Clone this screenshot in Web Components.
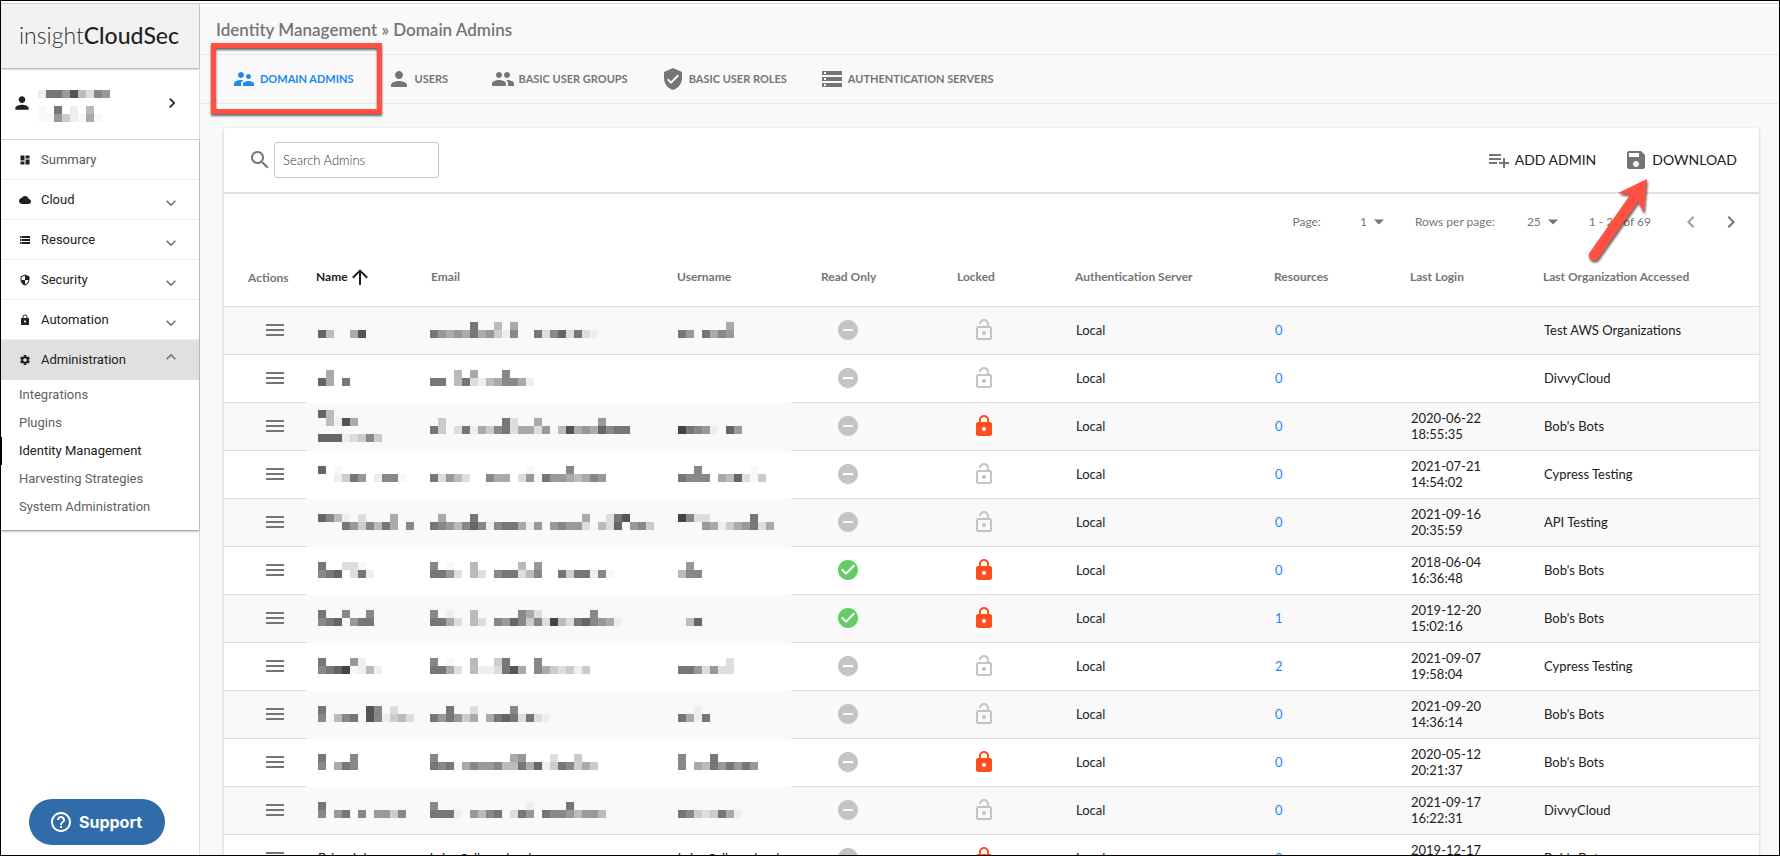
<!DOCTYPE html>
<html lang="en">
<head>
<meta charset="utf-8">
<title>Identity Management - Domain Admins</title>
<style>
    html, body {
        margin: 0;
        height: 100%;
    }
    body {
        font-family: Lato, "Liberation Sans", sans-serif;
        color: #212121;
        overflow: hidden;
    }
</style>
</head>
<body>

<app-shell>
    <side-nav slot="nav">
        <nav-group icon="dashboard" label="Summary" plain></nav-group>
        <nav-group icon="cloud" label="Cloud"></nav-group>
        <nav-group icon="storage" label="Resource"></nav-group>
        <nav-group icon="security" label="Security"></nav-group>
        <nav-group icon="lock" label="Automation"></nav-group>
        <nav-group icon="settings" label="Administration" open>
            <nav-link>Integrations</nav-link>
            <nav-link>Plugins</nav-link>
            <nav-link active>Identity Management</nav-link>
            <nav-link>Harvesting Strategies</nav-link>
            <nav-link>System Administration</nav-link>
        </nav-group>
    </side-nav>
    <page-header slot="header">
        <span slot="title">Identity Management » Domain Admins</span>
        <tab-item icon="supervisor" active marked>DOMAIN ADMINS</tab-item>
        <tab-item icon="person">USERS</tab-item>
        <tab-item icon="group">BASIC USER GROUPS</tab-item>
        <tab-item icon="verified">BASIC USER ROLES</tab-item>
        <tab-item icon="storage">AUTHENTICATION SERVERS</tab-item>
    </page-header>
    <admin-card></admin-card>
</app-shell>
<support-button>Support</support-button>

<script>
const icons = {
    dashboard: "M3 13h8V3H3v10zm0 8h8v-6H3v6zm10 0h8V11h-8v10zm0-18v6h8V3h-8z",
    cloud: "M19.35 10.04C18.67 6.59 15.64 4 12 4 9.11 4 6.6 5.64 5.35 8.04 2.34 8.36 0 10.91 0 14c0 3.31 2.69 6 6 6h13c2.76 0 5-2.24 5-5 0-2.64-2.05-4.78-4.65-4.96z",
    storage: "M2 20h20v-4H2v4zm2-3h2v2H4v-2zM2 4v4h20V4H2zm4 3H4V5h2v2zm-4 7h20v-4H2v4zm2-3h2v2H4v-2z",
    security: "M12 1L3 5v6c0 5.55 3.84 10.74 9 12 5.16-1.26 9-6.45 9-12V5l-9-4zm0 10.99h7c-.53 4.12-3.28 7.79-7 8.94V12H5V6.3l7-3.11v8.8z",
    lock: "M18 8h-1V6c0-2.76-2.24-5-5-5S7 3.24 7 6v2H6c-1.1 0-2 .9-2 2v10c0 1.1.9 2 2 2h12c1.1 0 2-.9 2-2V10c0-1.1-.9-2-2-2zm-6 9c-1.1 0-2-.9-2-2s.9-2 2-2 2 .9 2 2-.9 2-2 2zm3.1-9H8.9V6c0-1.71 1.39-3.1 3.1-3.1 1.71 0 3.1 1.39 3.1 3.1v2z",
    unlock: "M12 17c1.1 0 2-.9 2-2s-.9-2-2-2-2 .9-2 2 .9 2 2 2zm6-9h-1V6c0-2.76-2.24-5-5-5S7 3.24 7 6h1.9c0-1.71 1.39-3.1 3.1-3.1 1.71 0 3.1 1.39 3.1 3.1v2H6c-1.1 0-2 .9-2 2v10c0 1.1.9 2 2 2h12c1.1 0 2-.9 2-2V10c0-1.1-.9-2-2-2zm0 12H6V10h12v10z",
    settings: "M19.43 12.98c.04-.32.07-.64.07-.98s-.03-.66-.07-.98l2.11-1.65c.19-.15.24-.42.12-.64l-2-3.46c-.12-.22-.39-.3-.61-.22l-2.49 1c-.52-.4-1.08-.73-1.69-.98l-.38-2.65C14.46 2.18 14.25 2 14 2h-4c-.25 0-.46.18-.49.42l-.38 2.65c-.61.25-1.17.59-1.69.98l-2.49-1c-.23-.09-.49 0-.61.22l-2 3.46c-.13.22-.07.49.12.64l2.11 1.65c-.04.32-.07.65-.07.98s.03.66.07.98l-2.11 1.65c-.19.15-.24.42-.12.64l2 3.46c.12.22.39.3.61.22l2.49-1c.52.4 1.08.73 1.69.98l.38 2.65c.03.24.24.42.49.42h4c.25 0 .46-.18.49-.42l.38-2.65c.61-.25 1.17-.59 1.69-.98l2.49 1c.23.09.49 0 .61-.22l2-3.46c.12-.22.07-.49-.12-.64l-2.11-1.65zM12 15.5c-1.93 0-3.5-1.57-3.5-3.5s1.57-3.5 3.5-3.5 3.5 1.57 3.5 3.5-1.57 3.5-3.5 3.5z",
    person: "M12 12c2.21 0 4-1.79 4-4s-1.79-4-4-4-4 1.79-4 4 1.79 4 4 4zm0 2c-2.67 0-8 1.34-8 4v2h16v-2c0-2.66-5.33-4-8-4z",
    supervisor: "M16.5 12c1.38 0 2.49-1.12 2.49-2.5S17.88 7 16.5 7C15.12 7 14 8.12 14 9.5s1.12 2.5 2.5 2.5zM9 11c1.66 0 2.99-1.34 2.99-3S10.66 5 9 5C7.34 5 6 6.34 6 8s1.34 3 3 3zm7.5 3c-1.83 0-5.5.92-5.5 2.75V19h11v-2.25c0-1.83-3.67-2.75-5.5-2.75zM9 13c-2.33 0-7 1.17-7 3.5V19h7v-2.25c0-.85.33-2.34 2.37-3.47C10.5 13.1 9.66 13 9 13z",
    group: "M16 11c1.66 0 2.99-1.34 2.99-3S17.66 5 16 5c-1.66 0-3 1.34-3 3s1.34 3 3 3zm-8 0c1.66 0 2.99-1.34 2.99-3S9.66 5 8 5C6.34 5 5 6.34 5 8s1.34 3 3 3zm0 2c-2.33 0-7 1.17-7 3.5V19h14v-2.5c0-2.33-4.67-3.5-7-3.5zm8 0c-.29 0-.62.02-.97.05 1.16.84 1.97 1.97 1.97 3.45V19h6v-2.5c0-2.33-4.67-3.5-7-3.5z",
    verified: "M12 1L3 5v6c0 5.55 3.84 10.74 9 12 5.16-1.26 9-6.45 9-12V5l-9-4zm-2 16l-4-4 1.41-1.41L10 14.17l6.59-6.59L18 9l-8 8z",
    search: "M15.5 14h-.79l-.28-.27C15.41 12.59 16 11.11 16 9.5 16 5.91 13.09 3 9.5 3S3 5.91 3 9.5 5.91 16 9.5 16c1.61 0 3.09-.59 4.23-1.57l.27.28v.79l5 4.99L20.49 19l-4.99-5zm-6 0C7.01 14 5 11.99 5 9.5S7.01 5 9.5 5 14 7.01 14 9.5 11.99 14 9.5 14z",
    add: "M14 10H2v2h12v-2zm0-4H2v2h12V6zm4 8v-4h-2v4h-4v2h4v4h2v-4h4v-2h-4zM2 16h8v-2H2v2z",
    save: "M17 3H5c-1.11 0-2 .9-2 2v14c0 1.1.89 2 2 2h14c1.1 0 2-.9 2-2V7l-4-4zm-5 16c-1.66 0-3-1.34-3-3s1.34-3 3-3 3 1.34 3 3-1.34 3-3 3zm3-10H5V5h10v4z",
    arrowUp: "M13 20h-2V8l-5.5 5.5-1.42-1.42L12 4.16l7.92 7.92-1.42 1.42L13 8v12z",
    menu: "M3 18h18v-2H3v2zm0-5h18v-2H3v2zm0-7v2h18V6H3z",
    minus: "M12 2C6.48 2 2 6.48 2 12s4.48 10 10 10 10-4.48 10-10S17.52 2 12 2zm5 11H7v-2h10v2z",
    check: "M12 2C6.48 2 2 6.48 2 12s4.48 10 10 10 10-4.48 10-10S17.52 2 12 2zm-2 15l-5-5 1.41-1.41L10 14.17l7.59-7.59L19 8l-9 9z",
    right: "M10 6L8.59 7.41 13.17 12l-4.58 4.59L10 18l6-6z",
    left: "M15.41 7.41L14 6l-6 6 6 6 1.41-1.41L10.83 12z",
    expand: "M16.59 12.2L12 16.78 7.41 12.2 6 13.6l6 6 6-6z",
    caret: "M6 9h12l-6 6z",
    help: "M11 18h2v-2h-2v2zm1-16C6.48 2 2 6.48 2 12s4.48 10 10 10 10-4.48 10-10S17.52 2 12 2zm0 18c-4.41 0-8-3.59-8-8s3.59-8 8-8 8 3.59 8 8-3.59 8-8 8zm0-14c-2.21 0-4 1.79-4 4h2c0-1.1.9-2 2-2s2 .9 2 2c0 2-3 1.75-3 5h2c0-2.25 3-2.5 3-5 0-2.21-1.79-4-4-4z"
};

class MdIcon extends HTMLElement {
    connectedCallback() {
        if (this.shadowRoot) return;
        const size = this.getAttribute("size") || 24;
        this.attachShadow({mode: "open"}).innerHTML = `
            <style>
                :host { display: block; flex: none; }
                svg { display: block; fill: currentColor; }
            </style>
            <svg width="${size}" height="${size}" viewBox="0 0 24 24" aria-hidden="true"><path d="${icons[this.getAttribute("name")]}"/></svg>
        `;
    }
}
customElements.define("md-icon", MdIcon);


// Pixelated stand-in for a hidden value.
// "rows" holds one string per line, one hex digit of grey per 8px cell.
class PixelMask extends HTMLElement {
    connectedCallback() {
        if (this.shadowRoot) return;
        const rows = this.getAttribute("rows").split("/");
        const cols = Math.max(...rows.map(row => row.length));
        let cells = "";
        rows.forEach((row, y) => {
            [...row].forEach((c, x) => {
                if (c !== ".") {
                    const fill = c === "f" ? "#f8f8f8" : `#${c}${c}${c}`;
                    cells += `<rect x="${x * 8}" y="${y * 8}" width="8" height="8" fill="${fill}"/>`;
                }
            });
        });
        this.attachShadow({mode: "open"}).innerHTML = `
            <style>
                :host { display: block; }
                svg { display: block; shape-rendering: crispEdges; }
            </style>
            <svg width="${cols * 8}" height="${rows.length * 8}" aria-hidden="true">${cells}</svg>
        `;
    }
}
customElements.define("pixel-mask", PixelMask);


class AppShell extends HTMLElement {
    constructor() {
        super();
        this.attachShadow({mode: "open"}).innerHTML = `
            <style>
                :host {
                    display: flex;
                    flex-direction: column;
                    box-sizing: border-box;
                    height: 100vh;
                    border: 1px solid #000;
                    padding-top: 2px;
                    background: #fff;
                }
                .body {
                    flex: 1;
                    display: flex;
                    min-height: 0;
                    border-top: 1px solid #d8d4da;
                }
                main {
                    flex: 1;
                    min-width: 0;
                    overflow: hidden;
                    border-top: 3px solid #fff;
                    background: #f9f9f9;
                }
                .content { padding: 24px 20px 0 24px; }
            </style>
            <div class="body">
                <slot name="nav"></slot>
                <main>
                    <slot name="header"></slot>
                    <div class="content"><slot></slot></div>
                </main>
            </div>
        `;
    }
}
customElements.define("app-shell", AppShell);


class SideNav extends HTMLElement {
    constructor() {
        super();
        this.attachShadow({mode: "open"}).innerHTML = `
            <style>
                :host {
                    display: block;
                    width: 198px;
                    flex: none;
                    border-right: 1px solid #dcdcdc;
                    background: #fff;
                    font-family: Roboto, "Liberation Sans", sans-serif;
                }
                .logo {
                    display: flex;
                    align-items: center;
                    box-sizing: border-box;
                    height: 64px;
                    padding: 0 18px 2px;
                    background: #f2f2f2;
                    box-shadow: 0 1px 2px rgba(0, 0, 0, .4);
                    font: 300 23px Lato, sans-serif;
                    color: #333;
                }
                .logo b { font-weight: 500; color: #222; }
                .user {
                    display: flex;
                    align-items: center;
                    box-sizing: border-box;
                    width: 100%;
                    height: 72px;
                    padding: 0 17px 2px 11px;
                    border: 0;
                    border-bottom: 1px solid #dcdcdc;
                    background: none;
                    color: #212121;
                }
                .user pixel-mask { margin: 6px auto 0 6px; }
                nav { box-shadow: 0 1px 2px rgba(0, 0, 0, .5); padding-bottom: 9px; }
            </style>
            <div class="logo"><span>insight</span><b>CloudSec</b></div>
            <button class="user" aria-label="Account">
                <md-icon name="person" size="20"></md-icon>
                <pixel-mask rows="e7795bd89/........./f.7.e.b../ff9cefaf."></pixel-mask>
                <md-icon name="right" size="20"></md-icon>
            </button>
            <nav><slot></slot></nav>
        `;
    }
}
customElements.define("side-nav", SideNav);


class NavGroup extends HTMLElement {
    constructor() {
        super();
        this.attachShadow({mode: "open"});
    }

    connectedCallback() {
        const plain = this.hasAttribute("plain");
        this.shadowRoot.innerHTML = `
            <style>
                :host { display: block; }
                button {
                    display: flex;
                    align-items: center;
                    gap: 10px;
                    box-sizing: border-box;
                    width: 100%;
                    height: 40px;
                    padding: 0 18px;
                    border: 0;
                    border-bottom: 1px solid #f0f0f0;
                    background: none;
                    font: 400 13px Roboto, sans-serif;
                    color: #212121;
                    text-align: left;
                }
                button > span { flex: 1; }
                :host([plain]) span { color: #555; }
                .chevron { color: #757575; }
                :host([open]) button { margin-bottom: 1px; background: #e0e0e0; border-color: #e0e0e0; }
                :host([open]) .chevron { transform: rotate(180deg); }
            </style>
            <button>
                <md-icon name="${this.getAttribute("icon")}" size="12"></md-icon>
                <span>${this.getAttribute("label")}</span>
                ${plain ? "" : `<md-icon class="chevron" name="expand" size="20"></md-icon>`}
            </button>
            <slot></slot>
        `;
    }
}
customElements.define("nav-group", NavGroup);


class NavLink extends HTMLElement {
    constructor() {
        super();
        this.attachShadow({mode: "open"}).innerHTML = `
            <style>
                :host { display: block; }
                a {
                    display: block;
                    padding: 0 17px;
                    border-left: 1px solid transparent;
                    font-size: 13px;
                    line-height: 28px;
                    color: #616161;
                    text-decoration: none;
                }
                :host([active]) a { border-color: #000; color: #212121; }
            </style>
            <a href="#"><slot></slot></a>
        `;
    }
}
customElements.define("nav-link", NavLink);


class PageHeader extends HTMLElement {
    constructor() {
        super();
        this.attachShadow({mode: "open"}).innerHTML = `
            <style>
                :host { display: block; }
                h1 {
                    margin: 0;
                    padding: 0 16px 2px;
                    border-bottom: 1px solid #e8e8e8;
                    font-size: 17px;
                    font-weight: 600;
                    line-height: 45px;
                    color: #757575;
                }
                .tabs {
                    display: flex;
                    height: 48px;
                    padding: 0 16px;
                    border-bottom: 1px solid #e8e8e8;
                }
            </style>
            <h1><slot name="title"></slot></h1>
            <div class="tabs"><slot></slot></div>
        `;
    }
}
customElements.define("page-header", PageHeader);


class TabItem extends HTMLElement {
    constructor() {
        super();
        this.attachShadow({mode: "open"});
    }

    connectedCallback() {
        this.shadowRoot.innerHTML = `
            <style>
                :host { display: block; position: relative; }
                a {
                    display: flex;
                    align-items: center;
                    gap: 4px;
                    box-sizing: border-box;
                    min-width: 104px;
                    height: 48px;
                    padding: 0 17px 0 16px;
                    font-size: 11px;
                    font-weight: 700;
                    color: #757575;
                    text-decoration: none;
                    white-space: nowrap;
                }
                span { padding-bottom: 2px; }
                :host([active]) a { color: #2089f0; }
                /* red box drawn over the tab */
                .mark {
                    position: absolute;
                    inset: -12px -11px -11px -5px;
                    border: 5px solid #ff5043;
                    filter: drop-shadow(0 2px 1px rgba(0, 0, 0, .6));
                    pointer-events: none;
                    z-index: 1;
                }
            </style>
            <a href="#"><md-icon name="${this.getAttribute("icon")}"></md-icon><span><slot></slot></span></a>
            ${this.hasAttribute("marked") ? `<div class="mark"></div>` : ""}
        `;
    }
}
customElements.define("tab-item", TabItem);


// masks of name, email and username, then read only, locked, resources, last login, organization
const admins = [
    ["....../6b..a5", ".....7..b.a........../79a9a7a9ce8..7d86d7de", "......a/79.7a89", 0, 0, 0, "", "Test AWS Organizations"],
    [".a../6a.7", "...b.a...8.../77.b7deba88ae", "", 0, 0, 0, "", "DivvyCloud"],
    ["6b....../.be5a.../......../666edc8c", ".c.......7d..a.......9.../7c.d7eac87daad9.b5a9a6877", "......../4789e.69", 0, 1, 0, "2020-06-22 18:55:35", "Bob's Bots"],
    ["6.f......../..ec79.e88f", "............f....8..../7d9bd..8aa.d9f799aba89", "..8......f./7888.ab6dfc", 0, 0, 0, "2021-07-21 14:54:02", "Cypress Testing"],
    ["68be.d...a../...79c8b7a.8", ".a...7.............a..d75.../789b868e877ae9.9899d.bd6.98c", "48dd.f...7../...9aeca97da", 0, 0, 0, "2021-09-16 20:35:59", "API Testing"],
    ["7..ddf./876.d7e", "8.f..b.....b.9........./779d.bd.877db8..7c77e8f", ".9./b88", 1, 1, 0, "2018-06-04 16:36:48", "Bob's Bots"],
    ["7..8..8/876f977", "8.e..b.....8ad......8.../77ad.bd.8968c8d4bd7689ae", ".../.b6", 1, 1, 1, "2019-12-20 15:02:16", "Bob's Bots"],
    ["7...9e../8764febe", "8.f..b..c7...8....../77ad.beed75a.8acdcec", "......d/779d9dd", 0, 0, 2, "2021-09-07 19:58:04", "Cypress Testing"],
    ["7.....58.d../8.b87.58ecbd", "..7..d....8..../7979ca.a767d7de", "..e../7ae7f", 0, 0, 0, "2021-09-20 14:36:14", "Bob's Bots"],
    ["7...8/8.a78", "8.........a9...d..c../787fa8998bb7a6ec78cac", "8...7...../8.ab797979", 0, 1, 0, "2020-05-12 20:21:37", "Bob's Bots"],
    ["7........../8.97.8f99c8", "8...........e....7..../777e.9b87.d79.7889b99b", "......../78cdc7ae", 0, 0, 0, "2021-09-17 16:22:31", "DivvyCloud"],
    ["Brian Johnson", "brian@divvycloud.com", "brian@divvycloud", 0, 1, 0, "2019-12-17 18:21:04", "Bob's Bots"]
];

class AdminTable extends HTMLElement {
    constructor() {
        super();
        this.attachShadow({mode: "open"});
    }

    connectedCallback() {
        this.render();
    }

    render() {
        const hidden = (value) => /^[0-9a-f./]+$/.test(value) ? `<pixel-mask rows="${value}"></pixel-mask>` : value;
        this.shadowRoot.innerHTML = `
            <style>
                :host { display: block; }
                table {
                    width: 100%;
                    table-layout: fixed;
                    border-collapse: separate;
                    border-spacing: 0;
                }
                th, td {
                    box-sizing: border-box;
                    height: 48px;
                    padding: 0 0 1px 11px;
                    border-bottom: 1px solid #dcdcdc;
                    text-align: left;
                    vertical-align: middle;
                    line-height: 16px;
                }
                th {
                    height: 57px;
                    padding: 0 0 3px 10px;
                    font-size: 12px;
                    font-weight: 700;
                    color: #757575;
                    white-space: nowrap;
                }
                td { font-size: 13px; }
                tbody tr:nth-child(odd) { background: #f9f9f9; }
                /* the cover over the hidden values also hides the row lines */
                tr.covered .hide { border-color: transparent; }
                td.hide { padding-left: 12px; }
                td.email { padding-left: 9px; }
                td.username { padding-left: 11px; }
                th.actions { padding: 0 0 0 24px; }
                td.actions { padding-left: 39px; color: #757575; }
                th.read { padding-left: 30px; }
                td.read { padding-left: 45px; }
                td.locked { padding-left: 25px; }
                .sort { display: flex; align-items: center; color: #212121; }
                .date { width: 80px; }
                .off { color: #c4c4c4; }
                .on { color: #63cc63; }
                .red { color: #ff4d22; }
                a { color: #2089f0; text-decoration: none; }
                button {
                    display: block;
                    padding: 0;
                    border: 0;
                    background: none;
                    color: inherit;
                    font: inherit;
                }
            </style>
            <table>
                <colgroup>
                    <col style="width: 82px"><col style="width: 115px"><col style="width: 246px">
                    <col style="width: 124px"><col style="width: 156px"><col style="width: 118px">
                    <col style="width: 199px"><col style="width: 136px"><col style="width: 133px">
                    <col style="width: 226px">
                </colgroup>
                <thead>
                    <tr>
                        <th class="actions">Actions</th>
                        <th><button class="sort">Name<md-icon name="arrowUp"></md-icon></button></th>
                        <th>Email</th>
                        <th>Username</th>
                        <th class="read">Read Only</th>
                        <th>Locked</th>
                        <th>Authentication Server</th>
                        <th>Resources</th>
                        <th>Last Login</th>
                        <th>Last Organization Accessed</th>
                    </tr>
                </thead>
                <tbody></tbody>
            </table>
        `;
        let body = "";
        admins.forEach(([name, email, username, readOnly, locked, resources, login, org], i) => {
            body += `
                <tr class="${i > 0 && i < 10 ? "covered" : ""}">
                    <td class="actions"><button aria-label="Actions"><md-icon name="menu"></md-icon></button></td>
                    <td class="hide">${hidden(name)}</td>
                    <td class="hide email">${hidden(email)}</td>
                    <td class="hide username">${hidden(username)}</td>
                    <td class="read"><md-icon class="${readOnly ? "on" : "off"}" name="${readOnly ? "check" : "minus"}"></md-icon></td>
                    <td class="locked"><md-icon class="${locked ? "red" : "off"}" name="${locked ? "lock" : "unlock"}"></md-icon></td>
                    <td>Local</td>
                    <td><a href="#">${resources}</a></td>
                    <td><div class="date">${login}</div></td>
                    <td>${org}</td>
                </tr>`;
        });
        this.shadowRoot.querySelector("tbody").innerHTML = body;
    }
}
customElements.define("admin-table", AdminTable);


class AdminCard extends HTMLElement {
    constructor() {
        super();
        this.attachShadow({mode: "open"}).innerHTML = `
            <style>
                :host {
                    display: block;
                    position: relative;
                    background: #fff;
                    border-radius: 2px;
                    box-shadow: 0 1px 3px rgba(0, 0, 0, .25);
                }
                .toolbar {
                    display: flex;
                    align-items: center;
                    justify-content: space-between;
                    height: 64px;
                    padding: 0 22px 0 24px;
                    border-bottom: 2px solid #e0e0e0;
                    color: #757575;
                }
                .search { display: flex; align-items: center; gap: 2px; }
                input {
                    box-sizing: border-box;
                    width: 165px;
                    height: 36px;
                    padding: 0 8px;
                    border: 1px solid #c8c8c8;
                    border-radius: 3px;
                    font: 300 13px Lato, sans-serif;
                    color: #212121;
                }
                input::placeholder { color: #333; opacity: 1; }
                .buttons { display: flex; gap: 28px; }
                button {
                    display: flex;
                    align-items: center;
                    gap: 4px;
                    padding: 0;
                    border: 0;
                    background: none;
                    font: 400 14px Lato, sans-serif;
                    color: #757575;
                }
                button span { padding-bottom: 2px; color: #212121; }
                .paging {
                    display: flex;
                    align-items: center;
                    justify-content: flex-end;
                    height: 56px;
                    padding-right: 16px;
                    font-size: 12px;
                    color: #757575;
                }
                .select { display: flex; align-items: center; color: #757575; }
                select {
                    appearance: none;
                    width: 46px;
                    padding: 0;
                    border: 0;
                    background: none;
                    font: 400 12px Lato, sans-serif;
                    color: #757575;
                    text-align: right;
                    text-align-last: right;
                }
                label, select, .range { padding-bottom: 2px; }
                .select md-icon { margin: 0 26px 0 2px; }
                .range { margin-right: 28px; }
                .next { margin-left: 16px; }
                .prev { color: #9e9e9e; }
                .arrow {
                    position: absolute;
                    right: 100px;
                    top: 50px;
                    filter: drop-shadow(1px 2px 1px rgba(0, 0, 0, .6));
                    pointer-events: none;
                }
            </style>
            <div class="toolbar">
                <div class="search">
                    <md-icon name="search"></md-icon>
                    <input type="text" placeholder="Search Admins" aria-label="Search Admins">
                </div>
                <div class="buttons">
                    <button><md-icon name="add"></md-icon><span>ADD ADMIN</span></button>
                    <button><md-icon name="save"></md-icon><span>DOWNLOAD</span></button>
                </div>
            </div>
            <div class="paging">
                <label for="page">Page:</label>
                <span class="select"><select id="page"><option>1</option></select><md-icon name="caret" size="20"></md-icon></span>
                <label for="size">Rows per page:</label>
                <span class="select"><select id="size"><option>25</option></select><md-icon name="caret" size="20"></md-icon></span>
                <span class="range">1 - 25 of 69</span>
                <button class="prev" aria-label="Previous page"><md-icon name="left"></md-icon></button>
                <button class="next" aria-label="Next page"><md-icon name="right"></md-icon></button>
            </div>
            <admin-table></admin-table>
            <svg class="arrow" width="76" height="90" aria-hidden="true">
                <path d="M64 1 L35 15 L47 17 L7 74 A5 5 0 0 0 15 81 L55 24 L61 35 Z" fill="#ff5043"/>
            </svg>
        `;
    }
}
customElements.define("admin-card", AdminCard);


class SupportButton extends HTMLElement {
    constructor() {
        super();
        this.attachShadow({mode: "open"}).innerHTML = `
            <style>
                :host { position: fixed; left: 29px; bottom: 11px; }
                button {
                    display: flex;
                    align-items: center;
                    gap: 6px;
                    height: 46px;
                    padding: 0 23px 0 20px;
                    border: 0;
                    border-radius: 23px;
                    background: #2f6ca9;
                    font: 700 16px Inter, sans-serif;
                    color: #fff;
                }
            </style>
            <button><md-icon name="help"></md-icon><slot></slot></button>
        `;
    }
}
customElements.define("support-button", SupportButton);
</script>
</body>
</html>
